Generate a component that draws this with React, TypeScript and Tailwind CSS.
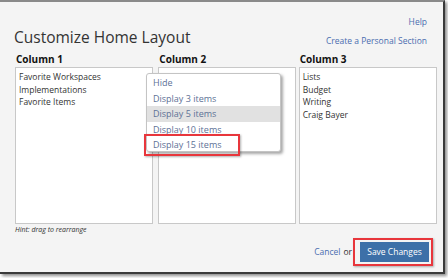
import React from "react";

const font = { fontFamily: '"Open Sans", "Noto Sans", sans-serif' };

export default function App() {
  return (
    <div className="w-[448px] h-[278px] bg-white overflow-hidden" style={font}>
      <div className="relative w-[445px] h-[274px] bg-[#f4f4f4] border-t-2 border-t-[#8a8a8a] border-r-2 border-r-[#3a3a3a] border-b-2 border-b-[#3a3a3a] shadow-[2px_2px_3px_rgba(0,0,0,0.45)] pl-[15px] pr-[6px] flex flex-col">
        <div className="flex justify-end pr-[10px] pt-[14px] text-[8.5px] leading-[12px] text-[#4a6db0]">
          <span>Help</span>
        </div>
        <div className="flex items-end justify-between pr-[10px] -mt-[1px]">
          <span className="text-[15.5px] leading-[20px] text-[#333] -ml-[1px]">Customize Home Layout</span>
          <span className="text-[8.5px] leading-[12px] text-[#4a6db0]">Create a Personal Section</span>
        </div>
        <div className="flex mt-[6px]">
          <div className="w-[139px] flex flex-col">
            <span className="text-[10px] leading-[13px] font-bold text-[#111] pl-[1px]">Column 1</span>
            <div className="mt-[1px] h-[157px] bg-white border border-[#c8c8c8] px-[3px] pt-[3px] text-[8.5px] leading-[12.7px] text-[#333]">
              <div>Favorite Workspaces</div>
              <div>Implementations</div>
              <div>Favorite Items</div>
            </div>
          </div>
          <div className="w-[138px] ml-[5px] flex flex-col">
            <span className="text-[10px] leading-[13px] font-bold text-[#111] pl-[1px]">Column 2</span>
            <div className="mt-[1px] h-[157px] bg-white border border-[#c8c8c8] px-[3px] pt-[3px] text-[8.5px] leading-[12.7px] text-[#333]">
              <div>Project Favorites</div>
            </div>
          </div>
          <div className="w-[139px] ml-[3px] flex flex-col">
            <span className="text-[10px] leading-[13px] font-bold text-[#111] pl-[1px]">Column 3</span>
            <div className="mt-[1px] h-[157px] bg-white border border-[#c8c8c8] px-[3px] pt-[3px] text-[8.5px] leading-[12.7px] text-[#333]">
              <div>Lists</div>
              <div>Budget</div>
              <div>Writing</div>
              <div>Craig Bayer</div>
            </div>
          </div>
        </div>
        <div className="mt-[1px] text-[7px] leading-[10px] italic text-[#333]">Hint: drag to rearrange</div>
        <div className="flex justify-end items-center pr-[4px] mt-[3px]">
          <span className="text-[8.5px] text-[#4a6db0]">Cancel</span>
          <span className="text-[8.5px] text-[#333] ml-[3px] mr-[1px]">or</span>
          <div className="border-2 border-[#e8363c] pl-[5px] pr-[2px] py-[2px] shadow-[1px_1px_2px_rgba(0,0,0,0.3)]">
            <div className="bg-[#3d70a8] text-white text-[8.5px] leading-[20px] w-[69px] text-center whitespace-nowrap">Save Changes</div>
          </div>
        </div>

        <div className="absolute left-[146px] top-[71px] w-[135px] h-[79px] bg-white border border-[#c4c4c4] rounded-[3px] shadow-[2px_2px_3px_rgba(0,0,0,0.35)] pt-[1px] text-[9px] leading-[15.5px] text-[#5d7196]">
          <div className="px-[6px]">Hide</div>
          <div className="px-[6px]">Display 3 items</div>
          <div className="px-[6px] bg-[#e1e1e1]">Display 5 items</div>
          <div className="px-[6px]">Display 10 items</div>
          <div className="px-[6px]">Display 15 items</div>
        </div>
        <div className="absolute left-[144px] top-[132px] w-[96px] h-[22px] border-2 border-[#e8363c] shadow-[1px_1px_2px_rgba(0,0,0,0.3)]"></div>
      </div>
    </div>
  );
}
